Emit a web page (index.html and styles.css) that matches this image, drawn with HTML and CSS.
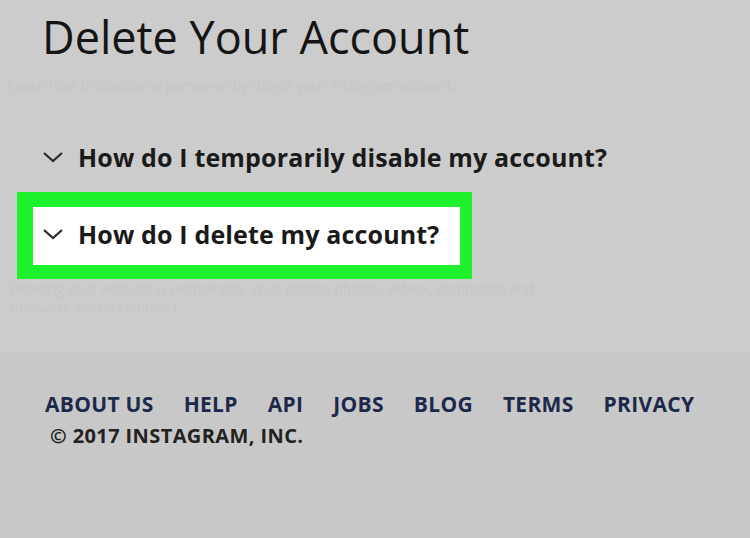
FILE: index.html
```html
<!DOCTYPE html>
<html lang="en">
<head>
    <meta charset="UTF-8">
    <meta name="viewport" content="width=device-width, initial-scale=1.0">
    <title>Delete Your Account</title>
    <link rel="stylesheet" href="styles.css">
</head>
<body>
    <div class="page">
        <h1>Delete Your Account</h1>
        <p class="faint intro">Learn how to disable or permanently delete your Instagram account.</p>

        <div class="faq">
            <div class="question">
                <svg class="chevron" width="22" height="12" viewBox="0 0 22 12"><polyline points="2,2 11,10 20,2"/></svg>
                <span>How do I temporarily disable my account?</span>
            </div>
            <div class="question highlight">
                <svg class="chevron" width="22" height="12" viewBox="0 0 22 12"><polyline points="2,2 11,10 20,2"/></svg>
                <span>How do I delete my account?</span>
            </div>
        </div>

        <p class="faint after">Deleting your account is permanent. Your profile, photos, videos, comments and</p>
        <p class="faint after">followers will be removed.</p>
    </div>

    <footer class="footer">
        <nav class="links">
            <a href="#">ABOUT US</a>
            <a href="#">HELP</a>
            <a href="#">API</a>
            <a href="#">JOBS</a>
            <a href="#">BLOG</a>
            <a href="#">TERMS</a>
            <a href="#">PRIVACY</a>
        </nav>
        <p class="copyright">&copy; 2017 INSTAGRAM, INC.</p>
    </footer>
</body>
</html>
```

FILE: styles.css
```css
body {
    margin: 0;
    background-color: #cccccc;
    font-family: "Open Sans", "Liberation Sans", sans-serif;
    height: 538px;
    display: flex;
    flex-direction: column;
}
.page {
    height: 352px;
    padding-top: 10px;
    box-sizing: border-box;
}
h1 {
    margin: 0 0 0 42px;
    font-weight: 400;
    font-size: 45px;
    line-height: 54px;
    color: #151515;
}
.faint {
    margin: 0;
    color: #c6c6c6;
    font-size: 14px;
}
.intro {
    margin: 12px 0 0 8px;
    line-height: 20px;
}
.faq {
    margin-top: 46px;
    display: flex;
    flex-direction: column;
    gap: 20px;
}
.question {
    display: flex;
    align-items: center;
    gap: 14px;
    padding-left: 42px;
    font-size: 25px;
    font-weight: 700;
    letter-spacing: 0.15px;
    line-height: 30px;
    color: #1a1a1a;
}
.chevron {
    fill: none;
    stroke: #2a2a2a;
    stroke-width: 2.2;
}
.highlight {
    margin-left: 17px;
    padding: 12px 0 16px 9px;
    background-color: #ffffff;
    border-style: solid;
    border-color: #1ef22c;
    border-width: 15px 12px 14px 16px;
    width: 418px;
}
.after {
    margin-left: 10px;
    line-height: 19px;
}
.after:first-of-type {
    margin-top: 2px;
}
.footer {
    flex: 1;
    background-color: #c8c8c8;
    padding: 40px 0 0 45px;
}
.links {
    display: flex;
    gap: 30px;
}
.links a {
    color: #1d284b;
    text-decoration: none;
    font-size: 21px;
    font-weight: 700;
    letter-spacing: 0.3px;
    line-height: 24px;
}
.copyright {
    margin: 8px 0 0 5px;
    color: #222222;
    font-size: 20px;
    font-weight: 700;
    letter-spacing: 0.4px;
    line-height: 24px;
}
```
